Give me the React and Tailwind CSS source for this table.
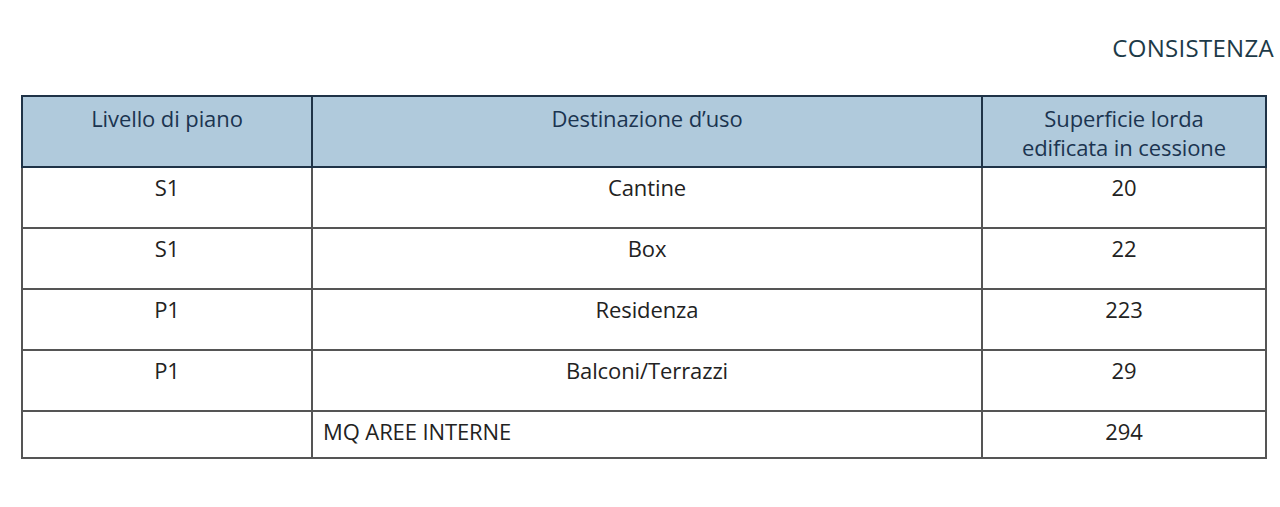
const rows = [
  { level: 'S1', use: 'Cantine', area: '20' },
  { level: 'S1', use: 'Box', area: '22' },
  { level: 'P1', use: 'Residenza', area: '223' },
  { level: 'P1', use: 'Balconi/Terrazzi', area: '29' },
];

const font = { fontFamily: '"Open Sans", "Liberation Sans", sans-serif' };

export default function App() {
  return (
    <div className="h-[507px] w-[1280px] bg-white text-[#222]" style={font}>
      <div className="flex justify-end pt-[32px] pr-[6px]">
        <h2 className="text-[24px] leading-[32px] tracking-[0.3px] text-[#1d3a48]">CONSISTENZA</h2>
      </div>
      <div className="pl-[21px] pt-[31px]">
        <table className="w-[1246px] table-fixed border-collapse text-[22px] leading-[29px] tracking-[-0.1px]">
          <colgroup>
            <col className="w-[290px]" />
            <col className="w-[670px]" />
            <col />
          </colgroup>
          <thead>
            <tr className="h-[71px] bg-[#b0cadc] text-[#1b3450]">
              <th className="border-2 border-[#1f3347] pt-[7px] align-top font-normal">Livello di piano</th>
              <th className="border-2 border-[#1f3347] pt-[7px] align-top font-normal">Destinazione d’uso</th>
              <th className="border-2 border-[#1f3347] pt-[7px] align-top font-normal">
                Superficie lorda
                <br />
                edificata in cessione
              </th>
            </tr>
          </thead>
          <tbody>
            {rows.map((r, i) => (
              <tr key={i} className="h-[61px]">
                <td className="border-2 border-[#555] pt-[5px] text-center align-top">{r.level}</td>
                <td className="border-2 border-[#555] pt-[5px] text-center align-top">{r.use}</td>
                <td className="border-2 border-[#555] pt-[5px] text-center align-top">{r.area}</td>
              </tr>
            ))}
            <tr className="h-[47px]">
              <td className="border-2 border-[#555]" />
              <td className="border-2 border-[#555] pt-[5px] pl-[10px] align-top">MQ AREE INTERNE</td>
              <td className="border-2 border-[#555] pt-[5px] text-center align-top">294</td>
            </tr>
          </tbody>
        </table>
      </div>
    </div>
  );
}
